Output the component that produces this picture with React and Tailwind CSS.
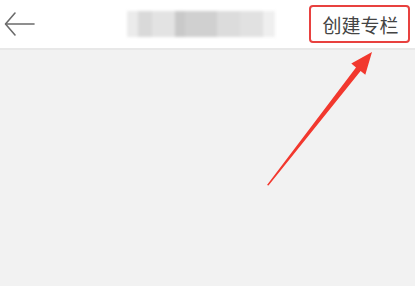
import React from 'react';

const blurBlocks = [
  { w: 11, c: '#ebebeb' },
  { w: 14, c: '#d9d9d9' },
  { w: 23, c: '#e3e3e3' },
  { w: 10, c: '#c9c9c9' },
  { w: 32, c: '#d0d0d0' },
  { w: 23, c: '#dcdcdc' },
  { w: 23, c: '#e1e1e1' },
  { w: 12, c: '#efefef' },
];

const App = () => {
  return (
    <div
      className="relative w-[415px] h-[286px] overflow-hidden bg-[#f2f2f2]"
      style={{ fontFamily: '"Noto Sans CJK SC", "Noto Sans", sans-serif' }}
    >
      {/* Header */}
      <div className="flex items-center h-[50px] bg-white border-b-2 border-[#e8e8e8]">
        <button className="ml-[4px] w-[32px] h-[32px] flex items-center justify-center">
          <svg width="32" height="26" viewBox="0 0 32 26" fill="none" stroke="#6b6b6b" strokeWidth="1.6" strokeLinecap="round" strokeLinejoin="round">
            <path d="M30 13H2" />
            <path d="M11 2L1.5 13L11 24" />
          </svg>
        </button>
        <div className="ml-[91px] flex h-[26px] blur-[1.5px]">
          {blurBlocks.map((b, i) => (
            <div key={i} style={{ width: b.w, backgroundColor: b.c }} />
          ))}
        </div>
        <div className="ml-auto mr-[5px] h-[38px] w-[101px] flex items-center justify-center border-2 border-[#e8413f] rounded-[4px]">
          <span className="text-[19px] leading-none text-[#444] pl-[2px]">创建专栏</span>
        </div>
      </div>

      {/* Annotation arrow */}
      <svg className="absolute left-0 top-0" width="415" height="286" viewBox="0 0 415 286">
        <polygon
          points="267,185 356,67.5 351.3,63.6 372,52 365.3,74.8 360.6,71.1 268.5,185.5"
          fill="#f2382e"
        />
      </svg>
    </div>
  );
};

export default App;
